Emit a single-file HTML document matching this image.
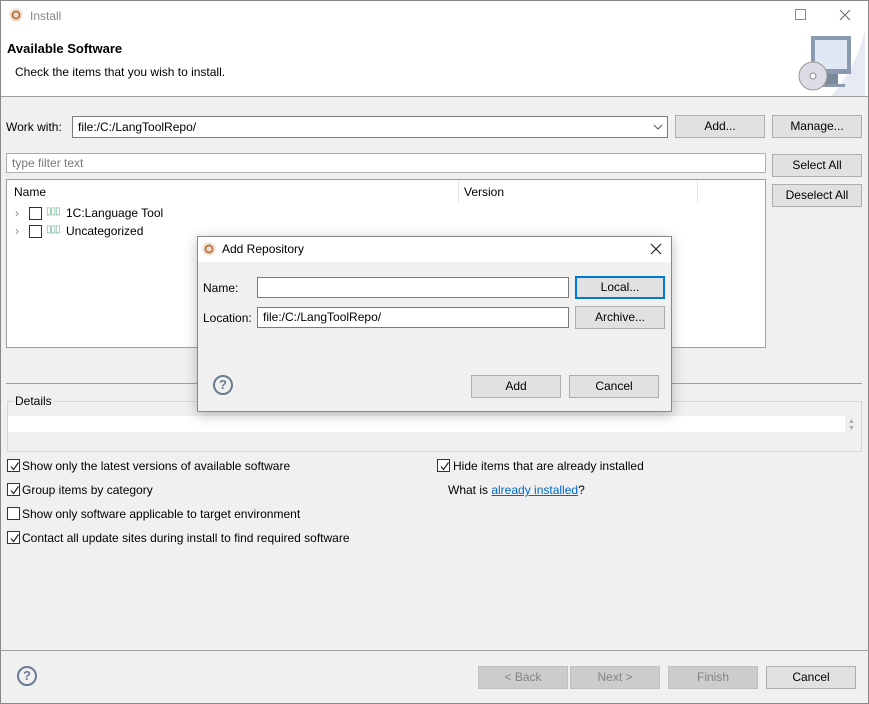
<!DOCTYPE html>
<html><head><style>
*{box-sizing:border-box;margin:0;padding:0}
body{width:869px;height:704px;position:relative;background:#f0f0f0;font-family:"Liberation Sans",sans-serif;font-size:12px;color:#000;overflow:hidden}
.a{position:absolute;white-space:nowrap}
.btn{position:absolute;height:23px;background:#e1e1e1;border:1px solid #adadad;text-align:center;line-height:21px}
.dis{background:#cccccc;border-color:#bfbfbf;color:#838383}
.inp{position:absolute;background:#fff;border:1px solid #7a7a7a;padding-left:5px;line-height:19px}
.cb{position:absolute;width:13px;height:13px;border:1px solid #333;background:#fff}
.cb svg{position:absolute;left:1px;top:1px}
</style></head><body>
<div class="a" style="left:0;top:0;width:869px;height:704px;border:1px solid #888"></div>
<div class="a" style="top:1px;left:1px;width:867px;height:96px;background:#fff;border-bottom:1px solid #a0a0a0"></div>
<svg class="a" style="left:9px;top:8px" width="14" height="14"><circle cx="7" cy="7" r="6.5" fill="#e8dccc"/><circle cx="7" cy="7" r="3.5" fill="none" stroke="#c0602a" stroke-width="1.5"/></svg>
<div class="a" style="left:30px;top:9px;color:#888;font-size:12px">Install</div>
<div class="a" style="left:795px;top:9px;width:11px;height:11px;border:1px solid #888"></div>
<svg class="a" style="left:839px;top:9px" width="12" height="12"><path d="M1 1L11 11M11 1L1 11" stroke="#666" stroke-width="1"/></svg>
<div class="a" style="left:7px;top:41px;font-weight:bold;font-size:13px">Available Software</div>
<div class="a" style="left:15px;top:65px">Check the items that you wish to install.</div>
<svg class="a" style="left:795px;top:30px" width="70" height="66"><path d="M36 66 Q60 40 70 0 L70 66Z" fill="#e6eaf3"/><rect x="16" y="6" width="40" height="38" fill="#8a9ab0"/><rect x="20" y="10" width="32" height="29" fill="#dfe8f4"/><rect x="29" y="44" width="14" height="10" fill="#7a8a9a"/><rect x="22" y="54" width="28" height="3" fill="#8a9aaa"/><circle cx="18" cy="46" r="14" fill="#dcdce6" stroke="#999"/><circle cx="18" cy="46" r="3" fill="#fff" stroke="#888"/></svg>
<div class="a" style="left:6px;top:120px">Work with:</div>
<div class="inp" style="left:72px;top:116px;width:596px;height:22px;line-height:20px">file:/C:/LangToolRepo/<svg style="position:absolute;right:4px;top:7px" width="10" height="6"><path d="M1 1L5 5L9 1" fill="none" stroke="#555"/></svg></div>
<div class="btn" style="left:675px;top:115px;width:90px">Add...</div>
<div class="btn" style="left:772px;top:115px;width:90px">Manage...</div>
<div class="inp" style="left:6px;top:153px;width:760px;height:20px;color:#777;border-color:#abadb3">type filter text</div>
<div class="btn" style="left:772px;top:154px;width:90px">Select All</div>
<div class="btn" style="left:772px;top:184px;width:90px">Deselect All</div>
<div class="a" style="left:6px;top:179px;width:760px;height:169px;background:#fff;border:1px solid #a0a0a0"></div>
<div class="a" style="left:458px;top:180px;width:1px;height:22px;background:#e5e5e5"></div>
<div class="a" style="left:697px;top:180px;width:1px;height:22px;background:#e5e5e5"></div>
<div class="a" style="left:14px;top:185px">Name</div>
<div class="a" style="left:464px;top:185px">Version</div>
<div class="a" style="left:15px;top:206px;color:#888">›</div><div class="cb" style="left:29px;top:207px"></div>
<div class="a" style="left:46px;top:206px;font-size:10px;color:#6a8;letter-spacing:-1px">▯▯▯</div><div class="a" style="left:66px;top:206px">1C:Language Tool</div>
<div class="a" style="left:15px;top:224px;color:#888">›</div><div class="cb" style="left:29px;top:225px"></div>
<div class="a" style="left:46px;top:224px;font-size:10px;color:#6a8;letter-spacing:-1px">▯▯▯</div><div class="a" style="left:66px;top:224px">Uncategorized</div>
<div class="a" style="left:6px;top:383px;width:856px;height:1px;background:#a0a0a0"></div>
<div class="a" style="left:7px;top:401px;width:855px;height:51px;border:1px solid #d5d5d5"></div>
<div class="a" style="left:13px;top:394px;background:#f0f0f0;padding:0 2px">Details</div>
<div class="a" style="left:8px;top:416px;width:837px;height:16px;background:#fff"></div>
<div class="a" style="left:848px;top:418px;font-size:7px;color:#aaa">▲<br>▼</div>
<div class="cb" style="left:7px;top:459px"><svg width="11" height="11"><path d="M2 5.5L4.5 8.5L9.5 1.5" fill="none" stroke="#222" stroke-width="1.2"/></svg></div><div class="a" style="left:22px;top:459px">Show only the latest versions of available software</div>
<div class="cb" style="left:7px;top:483px"><svg width="11" height="11"><path d="M2 5.5L4.5 8.5L9.5 1.5" fill="none" stroke="#222" stroke-width="1.2"/></svg></div><div class="a" style="left:22px;top:483px">Group items by category</div>
<div class="cb" style="left:7px;top:507px"></div><div class="a" style="left:22px;top:507px">Show only software applicable to target environment</div>
<div class="cb" style="left:7px;top:531px"><svg width="11" height="11"><path d="M2 5.5L4.5 8.5L9.5 1.5" fill="none" stroke="#222" stroke-width="1.2"/></svg></div><div class="a" style="left:22px;top:531px">Contact all update sites during install to find required software</div>
<div class="cb" style="left:437px;top:459px"><svg width="11" height="11"><path d="M2 5.5L4.5 8.5L9.5 1.5" fill="none" stroke="#222" stroke-width="1.2"/></svg></div><div class="a" style="left:453px;top:459px">Hide items that are already installed</div>
<div class="a" style="left:448px;top:483px">What is <span style="color:#0066cc;text-decoration:underline">already installed</span>?</div>
<div class="a" style="left:0;top:650px;width:869px;height:1px;background:#a0a0a0"></div>
<div class="a" style="left:17px;top:666px;width:20px;height:20px;border:2px solid #6a7a90;border-radius:50%;text-align:center;line-height:16px;color:#6a7a90;font-weight:bold;font-size:13px">?</div>
<div class="btn dis" style="left:478px;top:666px;width:90px">&lt; Back</div>
<div class="btn dis" style="left:570px;top:666px;width:90px">Next &gt;</div>
<div class="btn dis" style="left:668px;top:666px;width:90px">Finish</div>
<div class="btn" style="left:766px;top:666px;width:90px">Cancel</div>
<!-- dialog -->
<div class="a" style="left:197px;top:236px;width:475px;height:176px;background:#f0f0f0;border:1px solid #888;box-shadow:0 3px 12px rgba(0,0,0,.25)"></div>
<div class="a" style="left:198px;top:237px;width:473px;height:25px;background:#fff"></div>
<svg class="a" style="left:202px;top:242px" width="14" height="14"><circle cx="7" cy="7" r="6.5" fill="#e8dccc"/><circle cx="7" cy="7" r="3.5" fill="none" stroke="#c0602a" stroke-width="1.5"/></svg>
<div class="a" style="left:222px;top:242px">Add Repository</div>
<svg class="a" style="left:650px;top:243px" width="12" height="12"><path d="M1 1L11 11M11 1L1 11" stroke="#222" stroke-width="1.2"/></svg>
<div class="a" style="left:203px;top:281px">Name:</div>
<div class="inp" style="left:257px;top:277px;width:312px;height:21px"></div>
<div class="btn" style="left:575px;top:276px;width:90px;border:2px solid #0078d7;line-height:19px">Local...</div>
<div class="a" style="left:203px;top:311px">Location:</div>
<div class="inp" style="left:257px;top:307px;width:312px;height:21px;line-height:19px">file:/C:/LangToolRepo/</div>
<div class="btn" style="left:575px;top:306px;width:90px">Archive...</div>
<div class="a" style="left:213px;top:375px;width:20px;height:20px;border:2px solid #6a7a90;border-radius:50%;text-align:center;line-height:16px;color:#6a7a90;font-weight:bold;font-size:13px">?</div>
<div class="btn" style="left:471px;top:375px;width:90px">Add</div>
<div class="btn" style="left:569px;top:375px;width:90px">Cancel</div>
</body></html>
